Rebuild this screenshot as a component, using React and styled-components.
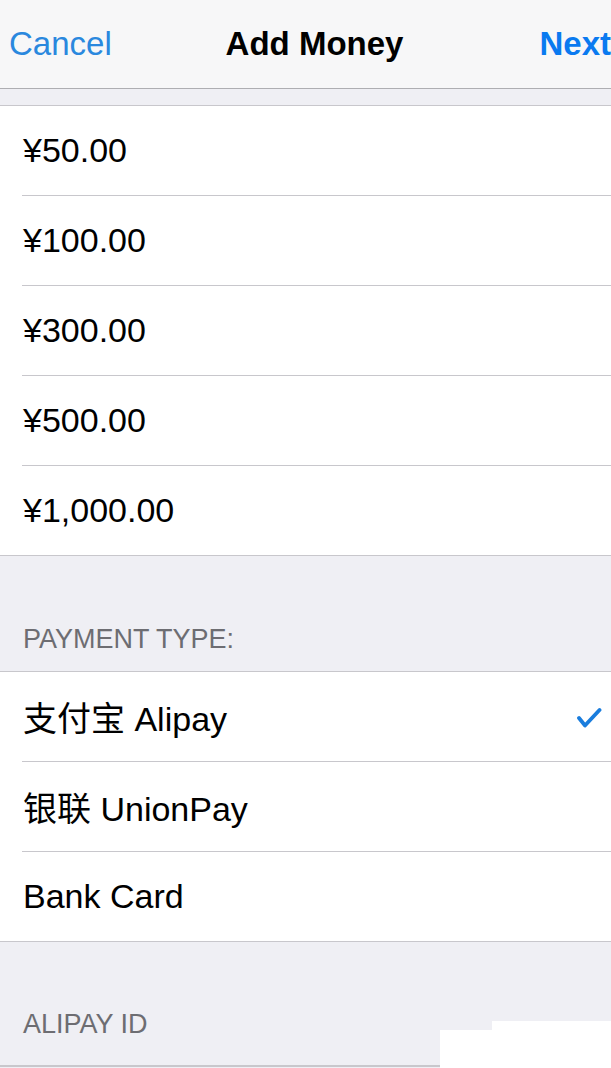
import React from "react";
import styled, { createGlobalStyle } from "styled-components";

const GlobalStyle = createGlobalStyle`
  html, body {
    margin: 0;
    padding: 0;
    background: #efeff4;
  }
  body {
    font-family: "Liberation Sans", "Noto Sans CJK SC", Arial, sans-serif;
    -webkit-font-smoothing: antialiased;
  }
`;

const Screen = styled.div`
  position: relative;
  width: 611px;
  height: 1068px;
  overflow: hidden;
  background: #efeff4;
`;

const NavBar = styled.header`
  display: grid;
  grid-template-columns: 1fr auto 1fr;
  align-items: center;
  height: 88px;
  padding-left: 9px;
  background: #f7f7f8;
  border-bottom: 1px solid #aeaeb2;
  font-size: 33px;
`;

const NavButton = styled.span`
  color: ${(props) => (props.strong ? "#0a7af0" : "#2a88de")};
  font-weight: ${(props) => (props.strong ? "bold" : "normal")};
  justify-self: ${(props) => (props.right ? "end" : "start")};
  white-space: nowrap;
`;

const NavTitle = styled.h1`
  margin: 0 0 0 9px;
  font-size: 33px;
  font-weight: bold;
  color: #000;
`;

const Spacer = styled.div`
  height: 16px;
`;

const Group = styled.section`
  background: #fff;
  border-top: 1px solid #c8c7cc;
  border-bottom: 1px solid #c8c7cc;
`;

const Row = styled.div`
  position: relative;
  display: flex;
  align-items: center;
  justify-content: space-between;
  height: 89px;
  padding: 0 9px 0 23px;
  font-size: 34px;
  color: #000;

  & + & {
    border-top: 1px solid transparent;
  }

  & + &::before {
    content: "";
    position: absolute;
    top: -1px;
    left: 22px;
    right: 0;
    height: 1px;
    background: #c8c7cc;
  }
`;

const SectionHeader = styled.div`
  display: flex;
  align-items: flex-end;
  height: ${(props) => props.h}px;
  padding: 0 0 ${(props) => props.pb}px 23px;
  box-sizing: border-box;
  font-size: 27px;
  line-height: 27px;
  color: #6d6d72;
  text-transform: uppercase;
`;

const Check = styled.svg`
  width: 26px;
  height: 22px;
  margin-top: 2px;
  flex: none;
`;

const Patch = styled.div`
  position: absolute;
  left: ${(props) => props.left}px;
  top: ${(props) => props.top}px;
  right: 0;
  bottom: 0;
  background: #fff;
`;

const amounts = ["¥50.00", "¥100.00", "¥300.00", "¥500.00", "¥1,000.00"];
const payTypes = [
  { id: "alipay", label: "支付宝 Alipay", selected: true },
  { id: "unionpay", label: "银联 UnionPay" },
  { id: "card", label: "Bank Card" },
];

const CheckMark = () => (
  <Check viewBox="0 0 26 22">
    <path
      d="M3 11 L9 18.5 L23.5 3"
      fill="none"
      stroke="#1a7ddd"
      strokeWidth="3.8"
      strokeLinecap="round"
      strokeLinejoin="round"
    />
  </Check>
);

export default function App() {
  return (
    <>
      <GlobalStyle />
      <Screen>
        <NavBar>
          <NavButton>Cancel</NavButton>
          <NavTitle>Add Money</NavTitle>
          <NavButton strong right>
            Next
          </NavButton>
        </NavBar>
        <Spacer />
        <Group>
          {amounts.map((a) => (
            <Row key={a}>{a}</Row>
          ))}
        </Group>
        <SectionHeader h={115} pb={18}>
          Payment Type:
        </SectionHeader>
        <Group>
          {payTypes.map((p) => (
            <Row key={p.id}>
              <span>{p.label}</span>
              {p.selected && <CheckMark />}
            </Row>
          ))}
        </Group>
        <SectionHeader h={123} pb={27}>
          Alipay ID
        </SectionHeader>
        <Group />
        <Patch left={440} top={1030} />
        <Patch left={492} top={1021} />
      </Screen>
    </>
  );
}
